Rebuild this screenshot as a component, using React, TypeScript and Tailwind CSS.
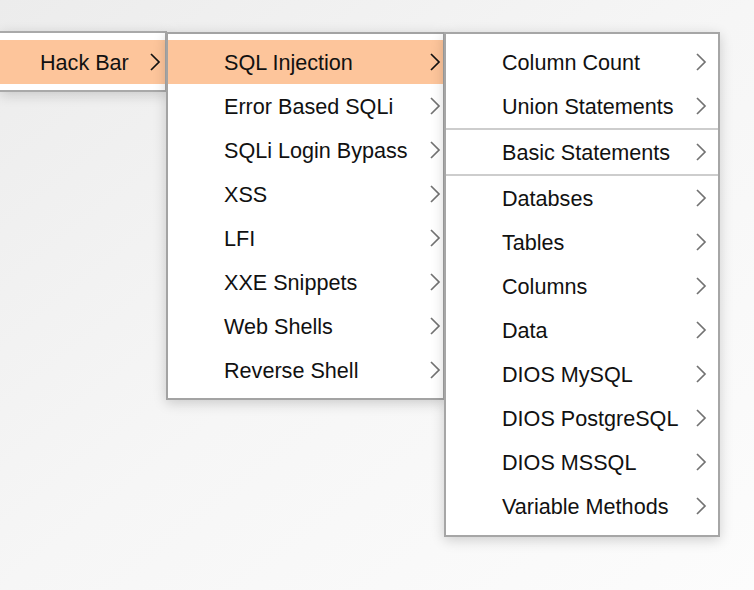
import React from "react";

type Item = { label: string; active?: boolean } | { sep: true };

function Chevron({ dark }: { dark?: boolean }) {
  return (
    <svg width="12" height="20" viewBox="0 0 12 20" className="shrink-0">
      <polyline
        points="2,2 10,10 2,18"
        fill="none"
        stroke={dark ? "#111111" : "#727272"}
        strokeWidth="1.7"
      />
    </svg>
  );
}

function Row({ label, active, pl, pr }: { label: string; active?: boolean; pl: string; pr: string }) {
  return (
    <div
      className={`h-[44px] flex items-center justify-between ${pl} ${pr} ${active ? "bg-[#fdc59b]" : ""}`}
    >
      <span className="mt-[2px] text-[21.6px] text-[#111111] leading-none whitespace-nowrap">{label}</span>
      <Chevron dark={active} />
    </div>
  );
}

const sqlMenu: Item[] = [
  { label: "SQL Injection", active: true },
  { label: "Error Based SQLi" },
  { label: "SQLi Login Bypass" },
  { label: "XSS" },
  { label: "LFI" },
  { label: "XXE Snippets" },
  { label: "Web Shells" },
  { label: "Reverse Shell" },
];

const injectionMenu: Item[] = [
  { label: "Column Count" },
  { label: "Union Statements" },
  { sep: true },
  { label: "Basic Statements" },
  { sep: true },
  { label: "Databses" },
  { label: "Tables" },
  { label: "Columns" },
  { label: "Data" },
  { label: "DIOS MySQL" },
  { label: "DIOS PostgreSQL" },
  { label: "DIOS MSSQL" },
  { label: "Variable Methods" },
];

export default function App() {
  return (
    <div
      className="w-[754px] h-[590px] overflow-hidden bg-linear-to-br from-[#ececec] via-[#f6f6f6] to-[#fcfcfc] flex items-start"
      style={{ fontFamily: '"Liberation Sans", Arial, sans-serif' }}
    >
      {/* top level menu, cut off at the left */}
      <div className="mt-[31px] w-[167px] shrink-0 bg-white border-y-2 border-r-2 border-[#a9a9a9] pt-[7px] pb-[6px] shadow-[0_3px_12px_rgba(0,0,0,0.16)]">
        <Row label="Hack Bar" active pl="pl-[40px]" pr="pr-[4px]" />
      </div>

      <div className="-ml-px mt-[32px] w-[279px] shrink-0 bg-white border-2 border-[#a3a3a3] pt-[6px] pb-[6px] shadow-[0_3px_12px_rgba(0,0,0,0.18)] relative">
        {sqlMenu.map((it, i) =>
          "sep" in it ? null : <Row key={i} label={it.label} active={it.active} pl="pl-[56px]" pr="pr-[2px]" />
        )}
      </div>

      <div className="-ml-px mt-[32px] w-[276px] shrink-0 bg-white border-2 border-[#a6a6a6] pt-[6px] pb-[7px] shadow-[0_3px_12px_rgba(0,0,0,0.18)] relative">
        {injectionMenu.map((it, i) =>
          "sep" in it ? (
            <div key={i} className="h-[2px] bg-[#cdcdcd]" />
          ) : (
            <Row key={i} label={it.label} pl="pl-[56px]" pr="pr-[11px]" />
          )
        )}
      </div>
    </div>
  );
}
